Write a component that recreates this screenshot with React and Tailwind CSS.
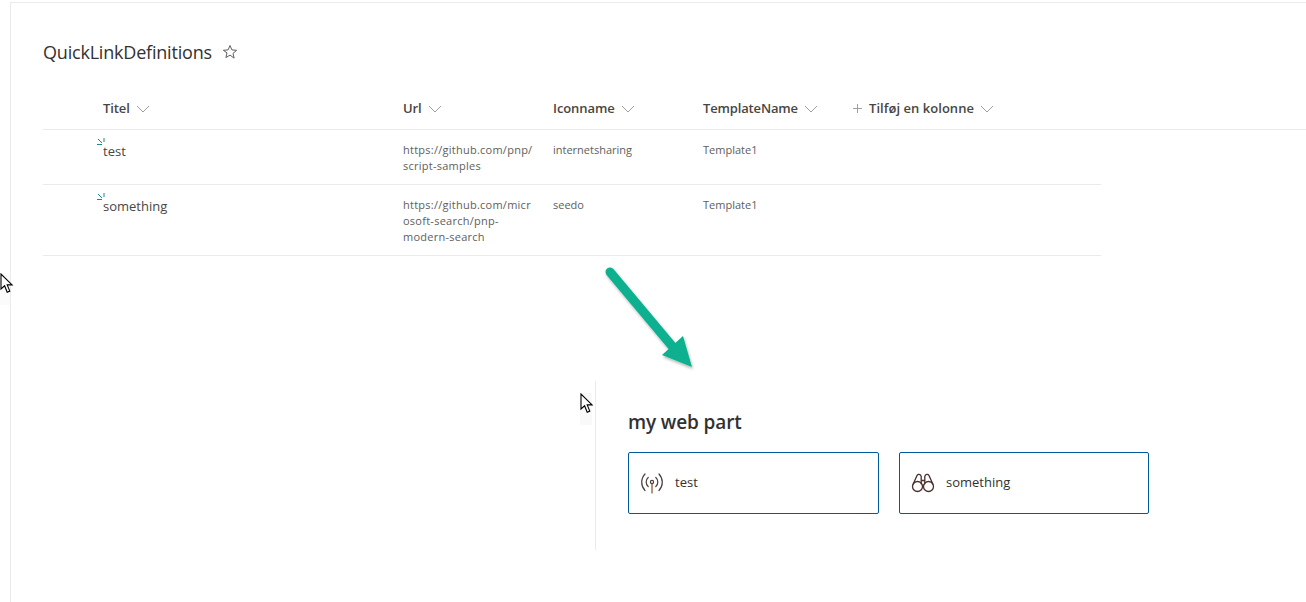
const font = { fontFamily: '"Open Sans", "Noto Sans", sans-serif' };

function Chevron() {
  return (
    <svg width="14" height="8" viewBox="0 0 14 8" fill="none" stroke="#a19f9d" strokeWidth="1">
      <path d="M1 1l6 6 6-6" />
    </svg>
  );
}

function HeaderCell({ label, width, plus, tracking = "tracking-[-0.08px]" }) {
  return (
    <div className={`flex items-center gap-[6px] ${width}`}>
      {plus && (
        <svg width="9" height="9" viewBox="0 0 9 9" stroke="#a19f9d" strokeWidth="1" className="mr-[1px]">
          <path d="M4.5 0v9M0 4.5h9" />
        </svg>
      )}
      <span className={`text-[13px] font-semibold text-[#484644] ${tracking}`}>{label}</span>
      <Chevron />
    </div>
  );
}

function Spinner() {
  return (
    <svg width="10" height="9" viewBox="0 0 10 9" fill="none" stroke="#1f8a8a" strokeWidth="1" className="absolute -left-[7px] -top-[4px]">
      <path d="M1 7.5h5M2 2l4 4M8 1v4" />
    </svg>
  );
}

function Row({ title, url, icon, height }) {
  return (
    <div className={`flex w-[1058px] border-b border-[#edebe9] pl-[60px] ${height}`}>
      <div className="w-[300px] pt-[11px]">
        <span className="relative inline-block align-top text-[13px] leading-[20px] text-[#484644]">
          <Spinner />
          {title}
        </span>
      </div>
      <div className="w-[150px] pt-[12px]">
        {url.map((line) => (
          <p key={line} className="whitespace-nowrap text-[11px] leading-[16px] tracking-[0.25px] text-[#605e5c]">{line}</p>
        ))}
      </div>
      <div className="w-[150px] pt-[12px] text-[11px] leading-[16px] text-[#605e5c]">{icon}</div>
      <div className="w-[150px] pt-[12px] text-[11px] leading-[16px] text-[#605e5c]">Template1</div>
    </div>
  );
}

function Cursor({ className }) {
  return (
    <svg width="14" height="21" viewBox="0 0 14 21" className={`absolute ${className}`}>
      <path d="M1 1v15l3.6-3.2 2.6 6.4 2.6-1.1-2.6-6.2h4.9z" fill="#fff" stroke="#000" strokeWidth="1.1" />
    </svg>
  );
}

function QuickCard({ label, children, width }) {
  return (
    <div className={`flex h-[62px] items-center rounded-[2px] border border-[#005a9e] bg-white pl-[11px] ${width}`}>
      {children}
      <span className="ml-[11px] text-[13px] text-[#323130]">{label}</span>
    </div>
  );
}

export default function App() {
  return (
    <div style={font} className="relative h-[602px] w-[1306px] overflow-hidden bg-white">
      <div className="ml-[10px] h-full border-l border-[#edebe9]">
        <div className="mt-[2px] h-full border-t border-[#edebe9] pl-[32px]">
          <div className="flex h-[87px] items-start pt-[37px]">
            <h1 className="text-[18px] font-normal leading-[24px] tracking-[-0.2px] text-[#323130]">QuickLinkDefinitions</h1>
            <svg width="16" height="16" viewBox="0 0 16 16" fill="none" stroke="#605e5c" strokeWidth="1" className="ml-[10px] mt-[4px]">
              <path d="M8 1.5l1.9 4.4 4.7.4-3.6 3.1 1.1 4.7L8 11.1l-4.1 2.5L5 8.9 1.4 6.3l4.7-.4z" />
            </svg>
          </div>
          <div className="flex h-[40px] items-center border-b border-[#edebe9] pb-[2px] pl-[60px]">
            <HeaderCell label="Titel" width="w-[300px]" />
            <HeaderCell label="Url" width="w-[150px]" />
            <HeaderCell label="Iconname" width="w-[150px]" />
            <HeaderCell label="TemplateName" width="w-[150px]" tracking="tracking-[-0.15px]" />
            <HeaderCell label="Tilføj en kolonne" plus width="w-[170px]" tracking="tracking-[0.04px]" />
          </div>
          <Row title="test" url={["https://github.com/pnp/", "script-samples"]} icon="internetsharing" height="h-[55px]" />
          <Row title="something" url={["https://github.com/micr", "osoft-search/pnp-", "modern-search"]} icon="seedo" height="h-[71px]" />

          <div className="ml-[552px] mt-[125px] h-[169px] w-[560px] border-l border-[#edebe9] pl-[32px] pt-[26px]">
            <h2 className="text-[19px] font-semibold leading-[30px] tracking-[-0.12px] text-[#323130]">my web part</h2>
            <div className="mt-[15px] flex gap-[20px]">
              <QuickCard label="test" width="w-[251px]">
                <svg width="24" height="24" viewBox="0 0 24 24" fill="none" stroke="#4a3f3a" strokeWidth="1.2" strokeLinecap="round">
                  <path d="M12 13v9" stroke="#8a4b1f" />
                  <circle cx="12" cy="11" r="1.6" />
                  <path d="M8.2 6.5a6 6 0 0 0 0 9M15.8 6.5a6 6 0 0 1 0 9" />
                  <path d="M5 3a12 12 0 0 0 0 16.5M19 3a12 12 0 0 1 0 16.5" />
                </svg>
              </QuickCard>
              <QuickCard label="something" width="w-[250px]">
                <svg width="24" height="24" viewBox="0 0 24 24" fill="none" stroke="#4a2f2a" strokeWidth="1.3" strokeLinejoin="round">
                  <circle cx="6.5" cy="15.5" r="5" />
                  <circle cx="17.5" cy="15.5" r="5" />
                  <path d="M2 13.5L6 4.5c1-1.8 3.7-1.4 4.2.8v8" />
                  <path d="M22 13.5L18 4.5c-1-1.8-3.7-1.4-4.2.8v8" />
                  <path d="M10.2 9.5h3.6M11.5 14.5h1" />
                </svg>
              </QuickCard>
            </div>
          </div>
        </div>
      </div>

      <svg width="110" height="120" viewBox="0 0 110 120" className="absolute left-[595px] top-[260px]">
        <defs>
          <filter id="s" x="-20%" y="-20%" width="140%" height="140%">
            <feDropShadow dx="1" dy="2" stdDeviation="1.5" floodColor="#000" floodOpacity="0.3" />
          </filter>
        </defs>
        <g filter="url(#s)">
          <path d="M15 12l62 74" stroke="#0bb08f" strokeWidth="9" strokeLinecap="round" fill="none" />
          <polygon points="97,107 67,95 88,76" fill="#0bb08f" />
        </g>
      </svg>

      <div className="absolute left-[580px] top-[393px] h-[32px] w-[12px] bg-[#f9f9f9]" />
      <div className="absolute left-0 top-[273px] h-[32px] w-[10px] bg-[#fbfbfb]" />
      <Cursor className="left-[580px] top-[393px]" />
      <Cursor className="left-0 top-[273px]" />
    </div>
  );
}
